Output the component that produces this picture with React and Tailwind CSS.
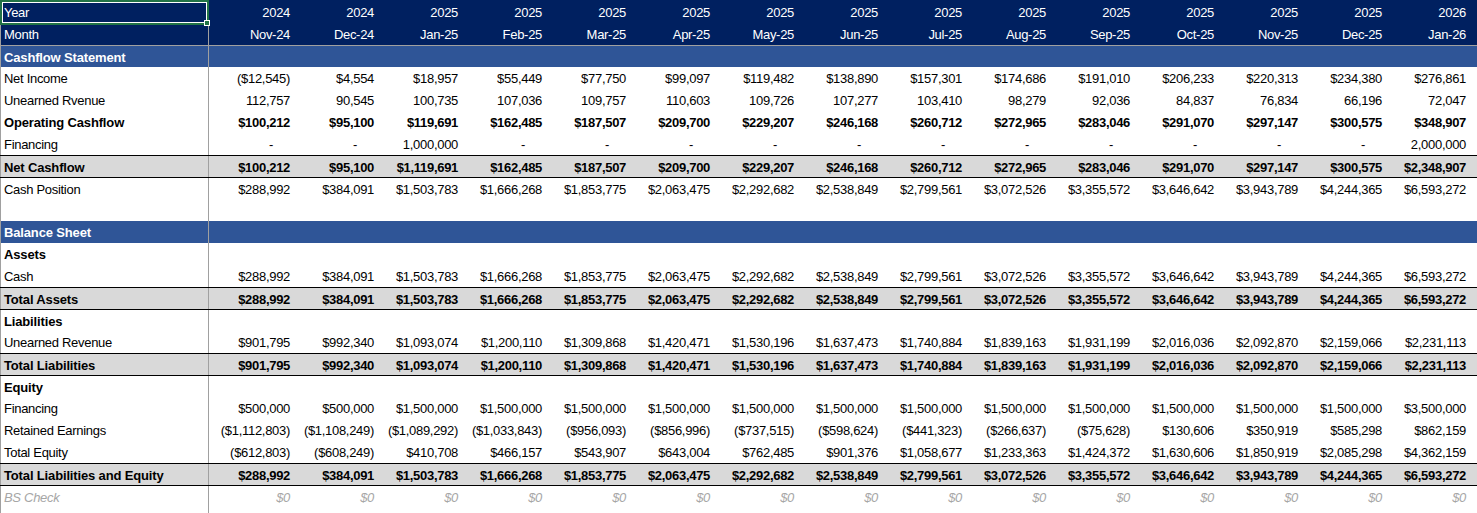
const years = ["2024", "2024", "2025", "2025", "2025", "2025", "2025", "2025", "2025", "2025", "2025", "2025", "2025", "2025", "2026"];
const months = ["Nov-24", "Dec-24", "Jan-25", "Feb-25", "Mar-25", "Apr-25", "May-25", "Jun-25", "Jul-25", "Aug-25", "Sep-25", "Oct-25", "Nov-25", "Dec-25", "Jan-26"];

const cashPos = ["$288,992", "$384,091", "$1,503,783", "$1,666,268", "$1,853,775", "$2,063,475", "$2,292,682", "$2,538,849", "$2,799,561", "$3,072,526", "$3,355,572", "$3,646,642", "$3,943,789", "$4,244,365", "$6,593,272"];
const unearned = ["$901,795", "$992,340", "$1,093,074", "$1,200,110", "$1,309,868", "$1,420,471", "$1,530,196", "$1,637,473", "$1,740,884", "$1,839,163", "$1,931,199", "$2,016,036", "$2,092,870", "$2,159,066", "$2,231,113"];
const empty = Array(15).fill("");

const rows = [
  { label: "Cashflow Statement", type: "section", vals: empty, topGray: true },
  { label: "Net Income", vals: ["($12,545)", "$4,554", "$18,957", "$55,449", "$77,750", "$99,097", "$119,482", "$138,890", "$157,301", "$174,686", "$191,010", "$206,233", "$220,313", "$234,380", "$276,861"] },
  { label: "Unearned Rvenue", vals: ["112,757", "90,545", "100,735", "107,036", "109,757", "110,603", "109,726", "107,277", "103,410", "98,279", "92,036", "84,837", "76,834", "66,196", "72,047"] },
  { label: "Operating Cashflow", type: "bold", vals: ["$100,212", "$95,100", "$119,691", "$162,485", "$187,507", "$209,700", "$229,207", "$246,168", "$260,712", "$272,965", "$283,046", "$291,070", "$297,147", "$300,575", "$348,907"] },
  { label: "Financing", vals: ["-", "-", "1,000,000", "-", "-", "-", "-", "-", "-", "-", "-", "-", "-", "-", "2,000,000"] },
  { label: "Net Cashflow", type: "total", vals: ["$100,212", "$95,100", "$1,119,691", "$162,485", "$187,507", "$209,700", "$229,207", "$246,168", "$260,712", "$272,965", "$283,046", "$291,070", "$297,147", "$300,575", "$2,348,907"] },
  { label: "Cash Position", vals: cashPos, topBlack: true },
  { label: "", vals: empty },
  { label: "Balance Sheet", type: "section", vals: empty },
  { label: "Assets", type: "bold", vals: empty },
  { label: "Cash", vals: cashPos },
  { label: "Total Assets", type: "total", vals: cashPos },
  { label: "Liabilities", type: "bold", vals: empty, topBlack: true },
  { label: "Unearned Revenue", vals: unearned },
  { label: "Total Liabilities", type: "total", vals: unearned },
  { label: "Equity", type: "bold", vals: empty, topBlack: true },
  { label: "Financing", vals: ["$500,000", "$500,000", "$1,500,000", "$1,500,000", "$1,500,000", "$1,500,000", "$1,500,000", "$1,500,000", "$1,500,000", "$1,500,000", "$1,500,000", "$1,500,000", "$1,500,000", "$1,500,000", "$3,500,000"] },
  { label: "Retained Earnings", vals: ["($1,112,803)", "($1,108,249)", "($1,089,292)", "($1,033,843)", "($956,093)", "($856,996)", "($737,515)", "($598,624)", "($441,323)", "($266,637)", "($75,628)", "$130,606", "$350,919", "$585,298", "$862,159"] },
  { label: "Total Equity", vals: ["($612,803)", "($608,249)", "$410,708", "$466,157", "$543,907", "$643,004", "$762,485", "$901,376", "$1,058,677", "$1,233,363", "$1,424,372", "$1,630,606", "$1,850,919", "$2,085,298", "$4,362,159"] },
  { label: "Total Liabilities and Equity", type: "total", vals: cashPos },
  { label: "BS Check", type: "check", vals: Array(15).fill("$0"), topBlack: true },
  { label: "", vals: empty },
];

const isBold = (row) => row.type === "section" || row.type === "total" || row.type === "bold";

function rowClass(row) {
  if (row.type === "section") return "bg-[#2f5597] text-white font-bold";
  if (row.type === "total") return "bg-[#d9d9d9] text-black font-bold border-t border-black";
  if (row.type === "bold") return "bg-white text-black font-bold";
  if (row.type === "check") return "bg-white text-[#a6a6a6] italic";
  return "bg-white text-black";
}

function Row({ row }) {
  const extra = row.topBlack ? "border-t border-black" : row.topGray ? "border-t border-[#a0a0a0]" : "";
  return (
    <div className={`flex h-[22px] leading-[23px] ${rowClass(row)} ${extra}`}>
      <div
        className={`w-[209px] shrink-0 border-l border-r border-[#a0a0a0] pl-[3px] whitespace-nowrap ${
          isBold(row) ? "tracking-[-0.15px]" : "tracking-[-0.3px]"
        }`}
      >
        {row.label}
      </div>
      {row.vals.map((v, i) => (
        <div
          key={i}
          className={`w-[84px] shrink-0 text-right whitespace-nowrap tracking-[-0.3px] ${v === "-" ? "pr-[20px]" : "pr-[3px]"}`}
        >
          {v}
        </div>
      ))}
      <div className="flex-1" />
    </div>
  );
}

export default function App() {
  return (
    <div className="relative w-[1477px] h-[513px] overflow-hidden bg-white font-['Liberation_Sans',Arial,sans-serif] text-[13px]">
      {/* header */}
      <div className="bg-[#002060] text-white pt-px tracking-[-0.3px]">
        <div className="flex h-[22px] leading-[23px]">
          <div className="w-[209px] shrink-0 border-l border-r border-[#a0a0a0] pl-[3px]">Year</div>
          {years.map((y, i) => (
            <div key={i} className="w-[84px] shrink-0 text-right pr-[3px]">{y}</div>
          ))}
        </div>
        <div className="flex h-[22px] leading-[23px]">
          <div className="w-[209px] shrink-0 border-l border-r border-[#a0a0a0] pl-[3px]">Month</div>
          {months.map((m, i) => (
            <div key={i} className="w-[84px] shrink-0 text-right pr-[3px]">{m}</div>
          ))}
        </div>
      </div>

      {rows.map((row, i) => (
        <Row key={i} row={row} />
      ))}

      {/* selected cell */}
      <div className="absolute left-0 top-0 w-[209px] h-[25px] border-2 border-[#217346]">
        <div className="w-full h-full border border-white" />
        <div className="absolute right-[-3px] bottom-[-3px] w-[6px] h-[6px] bg-[#217346] border border-white" />
      </div>
    </div>
  );
}
